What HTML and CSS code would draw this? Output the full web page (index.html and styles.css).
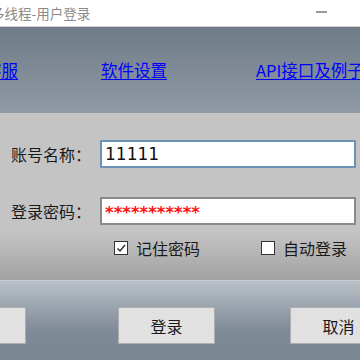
FILE: index.html
```html
<!DOCTYPE html>
<html lang="zh-CN">
<head>
    <meta charset="UTF-8">
    <title>多线程-用户登录</title>
    <link rel="stylesheet" href="styles.css">
</head>
<body>
    <div class="window">
        <!-- 标题栏 -->
        <div class="titlebar">
            <span class="title">多线程-用户登录</span>
            <span class="min-btn"></span>
        </div>

        <!-- 顶部链接 -->
        <div class="links">
            <a href="#" class="link-kefu">联系客服</a>
            <a href="#" class="link-set">软件设置</a>
            <a href="#" class="link-api">API接口及例子</a>
        </div>

        <!-- 登录表单 -->
        <div class="form">
            <div class="row row-user">
                <label for="user">账号名称：</label>
                <input type="text" id="user" class="user" value="11111">
            </div>
            <div class="row row-pass">
                <label for="pass">登录密码：</label>
                <div class="pass" id="pass">***********</div>
            </div>
            <div class="checks">
                <span class="check on">记住密码</span>
                <span class="check">自动登录</span>
            </div>
        </div>

        <!-- 按钮 -->
        <div class="footer">
            <button class="btn btn-reg">注册</button>
            <button class="btn btn-login">登录</button>
            <button class="btn btn-cancel">取消</button>
        </div>
    </div>
</body>
</html>
```

FILE: styles.css
```css
/* 基本 */
body { margin: 0; width: 360px; height: 360px; overflow: hidden; font-family: "Noto Sans CJK SC", "Noto Sans", sans-serif; font-size: 16px; color: #1a1a1a; }
.window { width: 360px; height: 360px; overflow: hidden; }

/* 标题栏 */
.titlebar { height: 26px; background: #ffffff; border-bottom: 1px solid #d2d2d2; display: flex; align-items: center; white-space: nowrap; }
.title { margin-left: -9px; font-size: 13.5px; color: #8a8a8a; }
.min-btn { width: 11px; height: 2px; background: #9a9a9a; margin-left: auto; margin-right: 33px; margin-top: -2px; }

/* 链接 */
.links { height: 86px; background: linear-gradient(#6f7b87, #8f9aa4); display: flex; align-items: center; white-space: nowrap; }
.links a { color: #0000ff; text-decoration: underline; text-underline-offset: 2px; flex-shrink: 0; font-size: 16.5px; }
.link-kefu { margin-left: -48px; }
.link-set { margin-left: 83px; }
.link-api { margin-left: 89px; }

/* 表单 */
.form { height: 167px; background: linear-gradient(#c4c4c4 0, #c4c4c4 118px, #a2a2a2 167px); padding-top: 27px; box-sizing: border-box; }
.row { display: flex; align-items: center; height: 28px; padding-left: 11px; }
.row-pass { margin-top: 29px; }
.row label { width: 89px; }
.user, .pass { width: 256px; height: 28px; box-sizing: border-box; background: #ffffff; font-size: 17px; padding: 0 3px; }
.user { border: 2px solid #6d93b7; font-family: "DejaVu Sans", sans-serif; color: #111; outline: none; }
.pass { border: 2px solid #8a8a8a; color: #ff1010; font-family: "DejaVu Sans", sans-serif; font-weight: bold; font-size: 16.5px; line-height: 28px; }

.checks { display: flex; align-items: center; margin-top: 13px; height: 20px; }
.check { display: flex; align-items: center; }
.check::before { content: ""; width: 12px; height: 12px; border: 1px solid #333; background: #fff; margin-right: 8px; box-sizing: content-box; }
.check.on::before { background: #fff url("data:image/svg+xml;utf8,<svg xmlns='http://www.w3.org/2000/svg' width='12' height='12'><path d='M2.5 6.5 L5 9 L10 3' fill='none' stroke='%23333' stroke-width='1.5'/></svg>") no-repeat center; }
.check:first-child { margin-left: 114px; }
.check + .check { margin-left: 61px; }

/* 底部按钮 */
.footer { height: 80px; background: linear-gradient(#bac1c8 0, #7e8a96 50px, #7a8692 80px); border-top: 1px solid #c9ced3; box-sizing: border-box; display: flex; align-items: flex-start; padding-top: 26px; white-space: nowrap; }
.btn { flex-shrink: 0; width: 97px; height: 37px; background: #e1e1e1; border: 1px solid #adadad; font-family: "Noto Sans CJK SC", sans-serif; font-size: 16px; color: #1a1a1a; padding: 0; }
.btn-reg { margin-left: -71px; }
.btn-login { margin-left: 92px; }
.btn-cancel { margin-left: 75px; }
```
